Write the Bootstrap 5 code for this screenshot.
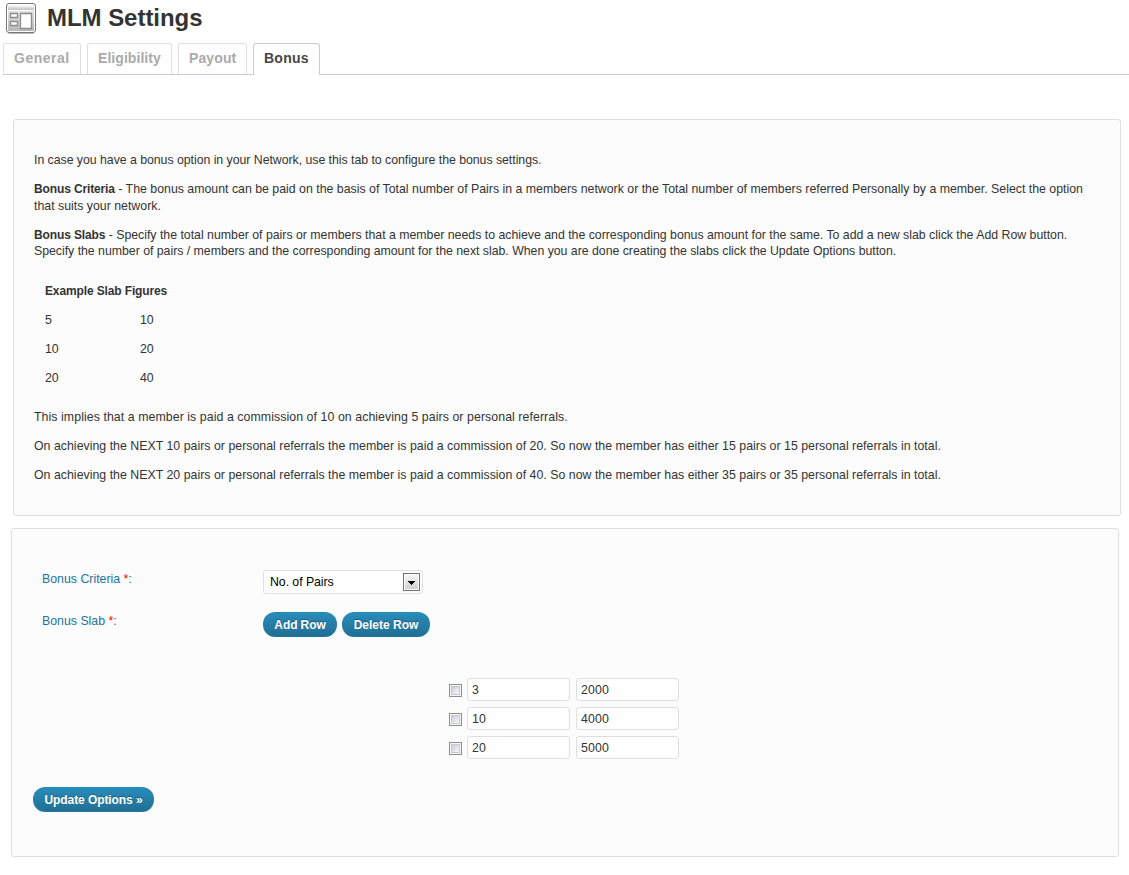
<!DOCTYPE html>
<html lang="en">
<head>
<meta charset="utf-8">
<title>MLM Settings</title>
<meta name="viewport" content="width=device-width, initial-scale=1">
<link href="https://cdn.jsdelivr.net/npm/bootstrap@5.3.0/dist/css/bootstrap.min.css" rel="stylesheet">
<style>
body{font:12.33px/16.8px "Liberation Sans",Arial,sans-serif;color:#333;background:#fff}
.page-title{font-size:24px;line-height:36px;font-weight:700;color:#333;letter-spacing:-.04px}
.title-icon{margin:3px 10px 0 5px}
.settings-tabs{border-bottom:1px solid #ccc;gap:6px;margin:7px 0 0 3px;height:32px}
.settings-tabs .nav-link{height:31px;padding:5px 0 0 10px;border:1px solid #dfdfdf;border-bottom:0;border-radius:3px 3px 0 0;font-size:14px;line-height:19px;font-weight:700;color:#aaa;background:#fff;margin:0;white-space:nowrap}
.settings-tabs .nav-link.active{height:32px;color:#464646;border-color:#ccc}
.tab-general{width:78px;letter-spacing:.5px}
.tab-eligibility{width:85px;letter-spacing:.06px}
.tab-payout{width:69px;letter-spacing:.12px}
.tab-bonus{width:67px;letter-spacing:.25px}
.panel{background:#fcfcfc;border:1px solid #dfdfdf;border-radius:3px}
.info{height:397px;margin:44px 8px 0 13px;padding:32.4px 20px 0}
.info p{margin:0 0 12px;letter-spacing:.003px}
.info b,.info th{font-size:12px;font-weight:700;letter-spacing:-.13px}
.info .tight{letter-spacing:-.04px}
.info .snug{letter-spacing:-.012px;line-height:16.2px;margin-bottom:13.2px}
.info .snug span{letter-spacing:-.026px}
.info .loose{letter-spacing:.07px}
.info .wide{letter-spacing:.02px}
.slabs{margin:17.8px 0 16px 11px;width:130px;border-collapse:collapse}
.slabs td,.slabs th{height:29px;padding:0;vertical-align:middle}
.slabs td:first-child{width:95px}
.form-panel{height:329px;margin:12px 10px 0 11px;padding:41px 21px 0}
.field-label{width:230px;padding:1px 0 0 9px;color:#21759b}
.slab-field{margin-top:18px}
.req{color:red}
.form-panel .form-select{width:160px;height:24px;padding:0 6px;font-size:12.33px;line-height:22px;color:#000;border:1px solid #dfdfdf;border-radius:3px;background:#fff;letter-spacing:-.06px}
.pick{position:relative}
.pick svg{position:absolute;right:3px;top:3px;pointer-events:none}
.btn-gap{gap:5px}
.btn-wp{height:25px;padding:1px 0 0;border:1px solid #298cba;border-color:#2589b8 #2281ad #21759b;border-radius:12px;background:linear-gradient(#298cba,#216f93);color:#fff!important;font-size:12px;line-height:23px;font-weight:700;text-shadow:0 -1px 0 rgba(0,0,0,.3)}
.btn-add{width:74px;letter-spacing:-.1px}
.btn-delete{width:88px}
.btn-update{width:121px;margin-top:28px;letter-spacing:-.08px}
.slab-rows{margin:41px 0 0 416px;gap:6px}
.slab-rows .form-control{width:103px;height:23px;margin-right:6px;padding:0 4px;font-size:12.33px;line-height:21px;color:#333;border:1px solid #dfdfdf;border-radius:3px;letter-spacing:.14px}
.slab-rows .form-check-input{width:13px;height:13px;margin:1px 5px 0 0;border:1px solid #8e8f8f;border-radius:0;background:linear-gradient(135deg,#c8ccd4,#f8f8f8) 2px 2px/7px 7px no-repeat #f6f6f6;box-shadow:inset 0 0 0 1px #f6f6f6,inset 0 0 0 2px #c6c9ce}
</style>
</head>
<body>
<header class="d-flex align-items-start">
<svg class="title-icon" width="32" height="32" viewBox="0 0 32 32">
<defs><linearGradient id="g" x2="0" y2="1"><stop stop-color="#fff"/><stop offset=".2" stop-color="#bbb"/><stop offset=".22" stop-color="#e4e4e4"/><stop offset="1" stop-color="#b8b8b8"/></linearGradient></defs>
<path d="M3 30.5h26" stroke="#bbb"/>
<rect x="1.5" y=".5" width="29" height="29" rx="2.5" fill="#fff" stroke="#777"/>
<rect x="3" y="2" width="26" height="26" fill="url(#g)"/>
<path d="M3 7.5h26" stroke="#fff"/>
<path d="M5.5 10.5h7v4h-7zM5.5 18.5h7v4h-7zM15.5 10.5h11v15h-11z" fill="#fff" stroke="#8c8c8c" stroke-width="1.3"/>
</svg>
<h1 class="page-title mb-0">MLM Settings</h1>
</header>
<ul class="nav settings-tabs">
<li class="nav-item"><a class="nav-link tab-general" href="#">General</a></li>
<li class="nav-item"><a class="nav-link tab-eligibility" href="#">Eligibility</a></li>
<li class="nav-item"><a class="nav-link tab-payout" href="#">Payout</a></li>
<li class="nav-item"><a class="nav-link tab-bonus active" href="#">Bonus</a></li>
</ul>
<main>
<section class="panel info">
<p class="tight">In case you have a bonus option in your Network, use this tab to configure the bonus settings.</p>
<p><b>Bonus Criteria</b> - The bonus amount can be paid on the basis of Total number of Pairs in a members network or the Total number of members referred Personally by a member. Select the option<br>that suits your network.</p>
<p class="snug"><b>Bonus Slabs</b> - Specify the total number of pairs or members that a member needs to achieve and the corresponding bonus amount for the same. To add a new slab click the Add Row button.<br><span>Specify the number of pairs / members and the corresponding amount for the next slab. When you are done creating the slabs click the Update Options button.</span></p>
<table class="slabs">
<tr><th colspan="2" class="text-nowrap">Example Slab Figures</th></tr>
<tr><td>5</td><td>10</td></tr>
<tr><td>10</td><td>20</td></tr>
<tr><td>20</td><td>40</td></tr>
</table>
<p class="loose">This implies that a member is paid a commission of 10 on achieving 5 pairs or personal referrals.</p>
<p class="wide">On achieving the NEXT 10 pairs or personal referrals the member is paid a commission of 20. So now the member has either 15 pairs or 15 personal referrals in total.</p>
<p class="wide">On achieving the NEXT 20 pairs or personal referrals the member is paid a commission of 40. So now the member has either 35 pairs or 35 personal referrals in total.</p>
</section>
<form class="panel form-panel">
<div class="d-flex align-items-start">
<label class="field-label" for="criteria">Bonus Criteria <span class="req">*</span>:</label>
<div class="pick">
<select class="form-select" id="criteria"><option>No. of Pairs</option></select>
<svg width="17" height="18" viewBox="0 0 17 18"><defs><linearGradient id="a" x2="0" y2="1"><stop stop-color="#f5f5f5"/><stop offset="1" stop-color="#d0d0d0"/></linearGradient></defs><rect x=".5" y=".5" width="16" height="17" fill="#fff" stroke="#707070"/><path d="M2 2h13v14H2z" fill="url(#a)"/><path d="M5 8h7v1h-1v1h-1v1H9v1H8v-1H7v-1H6V9H5z"/></svg>
</div>
</div>
<div class="slab-field d-flex align-items-start">
<div class="field-label">Bonus Slab <span class="req">*</span>:</div>
<div class="d-flex btn-gap"><button type="button" class="btn btn-wp btn-add">Add Row</button><button type="button" class="btn btn-wp btn-delete">Delete Row</button></div>
</div>
<div class="slab-rows d-flex flex-column">
<div class="d-flex align-items-center"><input class="form-check-input" type="checkbox"><input class="form-control" value="3"><input class="form-control" value="2000"></div>
<div class="d-flex align-items-center"><input class="form-check-input" type="checkbox"><input class="form-control" value="10"><input class="form-control" value="4000"></div>
<div class="d-flex align-items-center"><input class="form-check-input" type="checkbox"><input class="form-control" value="20"><input class="form-control" value="5000"></div>
</div>
<button type="button" class="btn btn-wp btn-update">Update Options »</button>
</form>
</main>
</body>
</html>
